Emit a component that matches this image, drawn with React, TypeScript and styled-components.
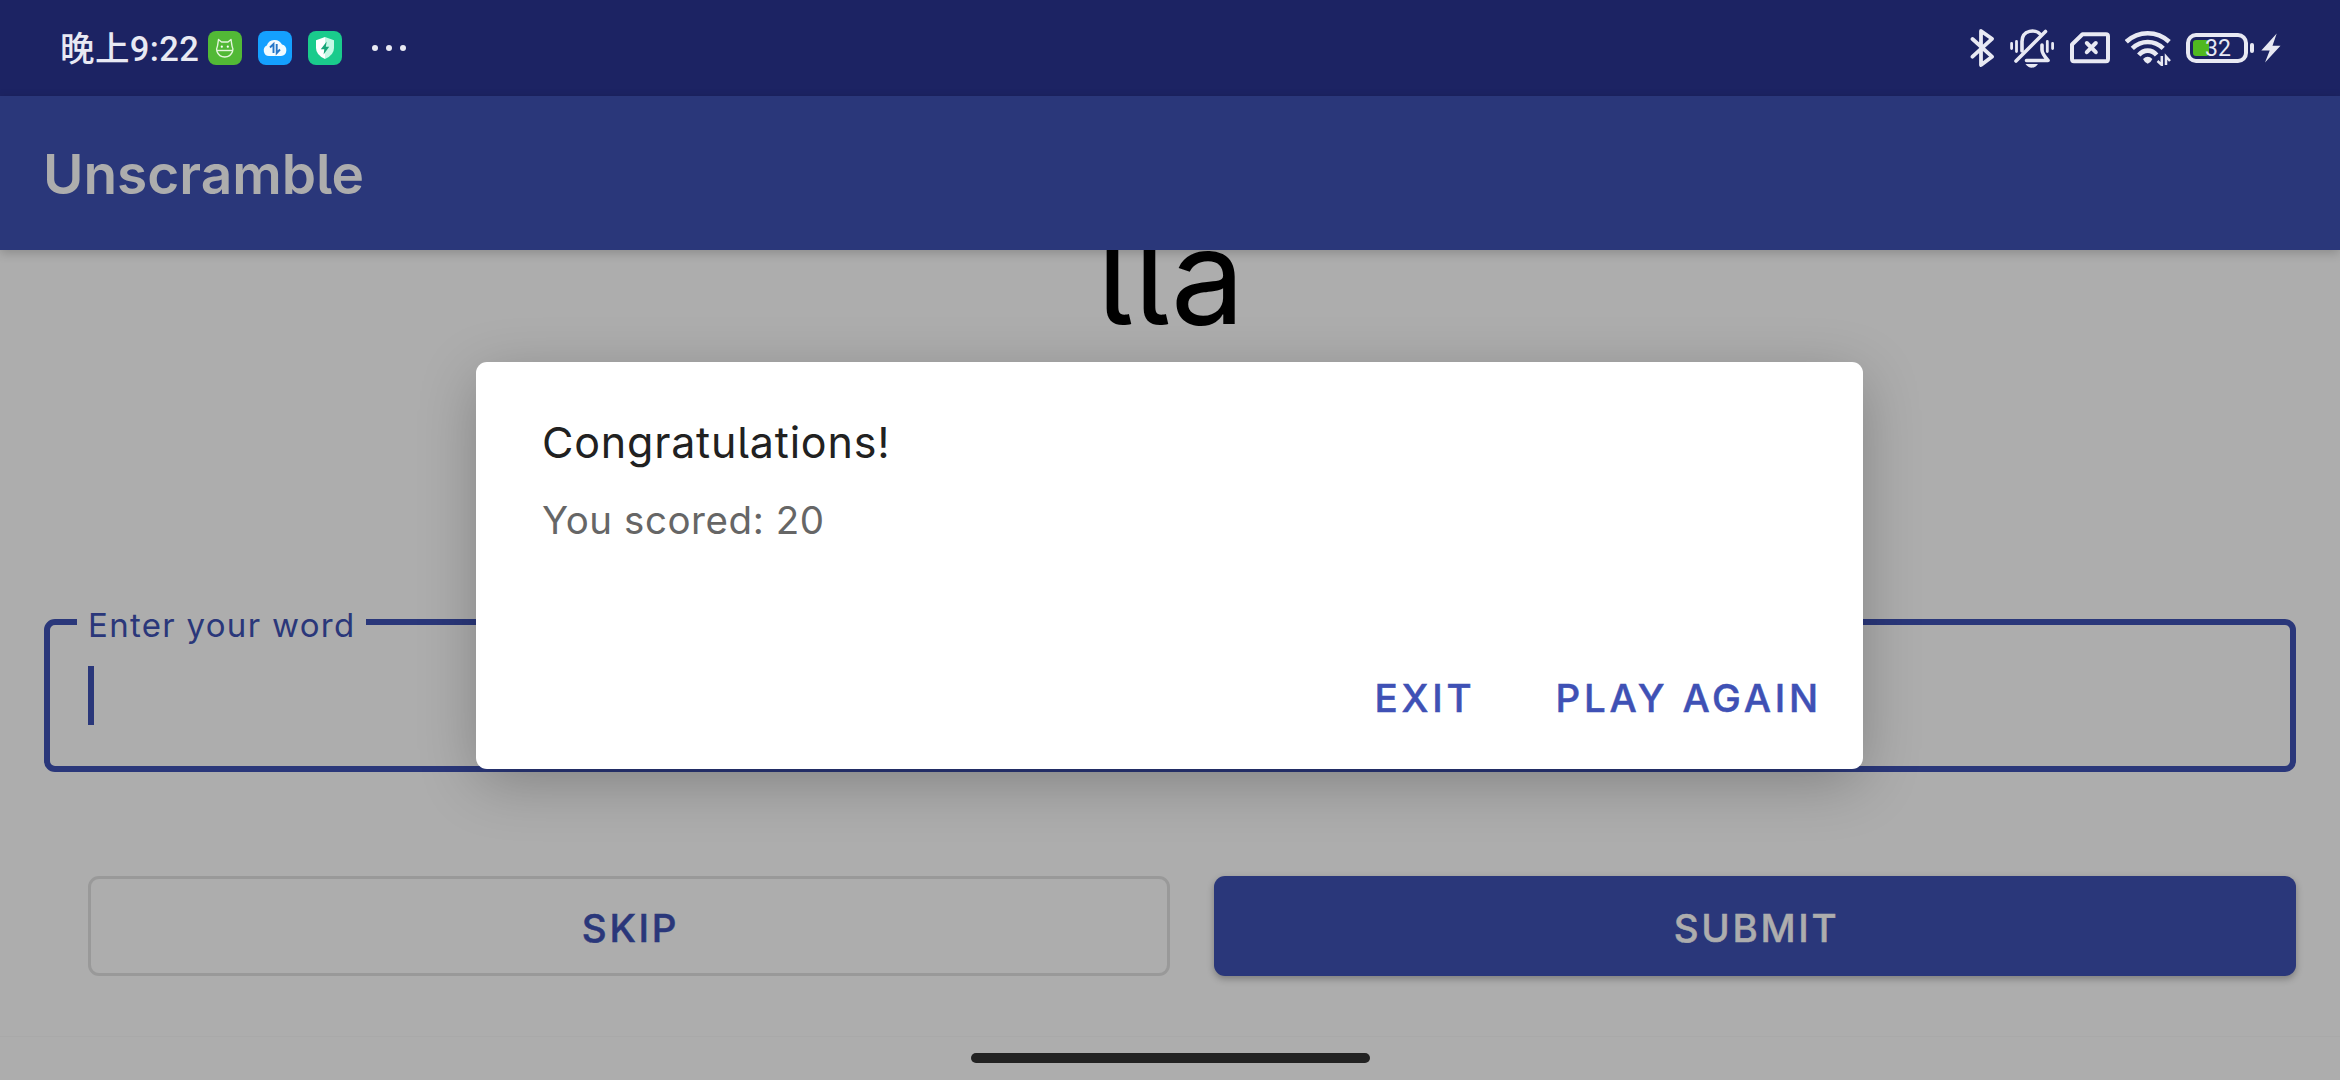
import React from 'react';
import styled, { createGlobalStyle } from 'styled-components';

const INDIGO = '#2a377a';
const SURFACE = '#adadad';
const STATUS_FG = '#e8e9f3';

const GlobalStyle = createGlobalStyle`
  * { box-sizing: border-box; }
  body { margin: 0; background: ${SURFACE}; }
`;

const Screen = styled.div`
  position: relative;
  display: flex;
  flex-direction: column;
  width: 2340px;
  height: 1080px;
  overflow: hidden;
  background: ${SURFACE};
  font-family: Inter, "Noto Sans", sans-serif;
  font-feature-settings: "cv05";
`;

const StatusBar = styled.header`
  display: flex;
  flex: none;
  align-items: center;
  justify-content: space-between;
  height: 96px;
  padding: 0 59px 0 60px;
  background: #1c2363;
  color: ${STATUS_FG};
`;

const StatusGroup = styled.div`
  display: flex;
  align-items: center;
`;

const Clock = styled.span`
  width: 148px;
  padding-top: 1px;
  font: 500 34.5px/40px Roboto, "Noto Sans CJK SC", sans-serif;
  letter-spacing: 0.4px;
  white-space: nowrap;
`;

const AppBadge = styled.svg`
  width: 34px;
  height: 34px;
  margin-right: 16px;
`;

const StatusIcon = styled.svg<{ $gap: number }>`
  display: block;
  margin-left: ${p => p.$gap}px;
`;

const Battery = styled.div`
  position: relative;
  display: flex;
  align-items: center;
  justify-content: center;
  width: 62px;
  height: 30px;
  margin-left: 15px;
  padding-left: 2px;
  border: 4px solid ${STATUS_FG};
  border-radius: 10px;
`;

const BatteryLevel = styled.i`
  position: absolute;
  left: 3px;
  top: 3px;
  width: 16px;
  height: 16px;
  border-radius: 3px;
  background: #50b820;
`;

const BatteryText = styled.span`
  position: relative;
  padding-top: 1px;
  font: 400 23px/22px Roboto, sans-serif;
`;

const BatteryTip = styled.i`
  width: 4px;
  height: 10px;
  margin-left: 2px;
  border-radius: 2px;
  background: ${STATUS_FG};
`;

const AppBar = styled.div`
  position: relative;
  z-index: 1;
  display: flex;
  flex: none;
  align-items: center;
  height: 154px;
  padding: 2px 43px 0;
  background: ${INDIGO};
  box-shadow: 0 3px 10px rgba(0, 0, 0, 0.2);
`;

const AppTitle = styled.h1`
  margin: 0;
  color: ${SURFACE};
  font-size: 55px;
  font-weight: 600;
  line-height: 66px;
`;

const Content = styled.main`
  display: flex;
  flex: 1;
  flex-direction: column;
  min-height: 0;
  padding: 0 44px;
`;

const ScrambledWord = styled.div`
  flex: none;
  height: 160px;
  margin-top: -54px;
  padding-left: 2px;
  color: #000;
  font-size: 132px;
  line-height: 160px;
  letter-spacing: 0.8px;
  text-align: center;
`;

const WordField = styled.fieldset`
  flex: none;
  min-width: 0;
  height: 170px;
  margin: 246px 0 0;
  padding: 0 27px;
  border: 6px solid ${INDIGO};
  border-radius: 11px;
`;

const FieldLabel = styled.legend`
  width: 289px;
  height: 40px;
  padding: 3px 0 0 11px;
  color: ${INDIGO};
  font-size: 33px;
  line-height: 40px;
  letter-spacing: 1.3px;
  white-space: nowrap;
`;

const Caret = styled.div`
  width: 6px;
  height: 59px;
  margin: 24px 0 0 11px;
  background: ${INDIGO};
`;

const Actions = styled.div`
  display: grid;
  flex: none;
  grid-template-columns: 1fr 1fr;
  gap: 44px;
  height: 100px;
  margin-top: 104px;
  padding-left: 44px;
`;

const ActionButton = styled.button<{ $filled?: boolean }>`
  margin: 0;
  padding: 3px 0 0 3px;
  border: ${p => (p.$filled ? '0' : '3px solid #999')};
  border-radius: 11px;
  background: ${p => (p.$filled ? INDIGO : 'transparent')};
  box-shadow: ${p => (p.$filled ? '0 3px 7px rgba(0, 0, 0, 0.28)' : 'none')};
  color: ${p => (p.$filled ? SURFACE : INDIGO)};
  font: inherit;
  font-size: 38.5px;
  font-weight: 500;
  letter-spacing: 2.7px;
  -webkit-text-stroke: 0.5px currentColor;
`;

const NavigationBar = styled.footer`
  display: flex;
  flex: none;
  justify-content: center;
  height: 44px;
  padding-top: 16px;
  border-top: 1px solid #a9a9a9;
`;

const HomeHandle = styled.div`
  width: 399px;
  height: 10px;
  border-radius: 5px;
  background: #222;
`;

const Dialog = styled.section`
  position: absolute;
  z-index: 2;
  left: 476px;
  top: 362px;
  display: flex;
  flex-direction: column;
  width: 1387px;
  height: 407px;
  padding: 53px 41px 41px 66px;
  border-radius: 11px;
  background: #fff;
  box-shadow: 0 14px 60px -4px rgba(0, 0, 0, 0.27);
`;

const DialogTitle = styled.h2`
  margin: 0;
  color: #212121;
  font-size: 43px;
  font-weight: 400;
  line-height: 54px;
  letter-spacing: 0.8px;
`;

const DialogMessage = styled.p`
  margin: 27px 0 0;
  color: #666;
  font-size: 38.5px;
  line-height: 48px;
  letter-spacing: 0.55px;
`;

const DialogActions = styled.div`
  display: flex;
  justify-content: flex-end;
  gap: 80px;
  margin-top: auto;
`;

const DialogButton = styled.button`
  margin: 0;
  padding: 0;
  border: 0;
  background: none;
  color: #3f51b5;
  font: inherit;
  font-size: 38.5px;
  font-weight: 500;
  line-height: 60px;
  letter-spacing: 3.8px;
  -webkit-text-stroke: 0.5px currentColor;
`;

const MascotBadge = () => (
  <AppBadge viewBox="0 0 34 34">
    <rect width="34" height="34" rx="8" fill="#52b936" />
    <g fill="none" stroke="#e4f6dc" strokeWidth="1.4" strokeLinejoin="round">
      <path d="M9.5 15 L10.5 8.5 L13.5 11 H20 L23 8.5 L24 15 Q25.5 18 24.5 20.5 Q22.5 26 16.8 26 Q11 26 9 20.5 Q8 18 9.5 15 Z" />
      <path d="M8.8 19.5 H24.8" />
    </g>
    <circle cx="13.8" cy="15.7" r="1.1" fill="#fff" />
    <circle cx="19.8" cy="15.7" r="1.1" fill="#fff" />
  </AppBadge>
);

const CloudBadge = () => (
  <AppBadge viewBox="0 0 34 34">
    <rect width="34" height="34" rx="8" fill="#14a0ff" />
    <path d="M11 25 A5.5 5.5 0 0 1 8.8 14.6 A8.2 8.2 0 0 1 24 13.6 A5.8 5.8 0 0 1 23 25 Z" fill="#f2fbff" />
    <path d="M12 16.5 L15.5 13 V22 M18.7 13 V22 L22 18.5" fill="none" stroke="#2576c8" strokeWidth="1.9" />
  </AppBadge>
);

const ShieldBadge = () => (
  <AppBadge viewBox="0 0 34 34">
    <rect width="34" height="34" rx="8" fill="#1acb8c" />
    <path d="M17 6 L8 9.2 V17 Q8 24 17 28 Z" fill="#fff" />
    <path d="M17 6 L26 9.2 V17 Q26 24 17 28 Z" fill="#c5f8e5" />
    <path d="M18.7 10.5 L12.8 18.2 H16.3 L15.6 23.5 L21.2 15.7 H17.8 Z" fill="#17a678" />
  </AppBadge>
);

const stroke = {
  fill: 'none',
  stroke: STATUS_FG,
  strokeWidth: 4,
  strokeLinecap: 'round' as const,
  strokeLinejoin: 'round' as const,
};

const BluetoothIcon = () => (
  <StatusIcon $gap={0} width="26" height="40" viewBox="0 0 26 40">
    <path {...stroke} strokeWidth={3.8} d="M2.5 11 L22 28.7 L11 37 V3 L22 10.8 L2.5 28.7" />
  </StatusIcon>
);

const BellOffIcon = () => (
  <StatusIcon $gap={14} width="45" height="40" viewBox="0 0 45 40">
    <g {...stroke} strokeWidth={3.6}>
      <path d="M12 23 V13.5 C12 1.5 26 1 30 6" />
      <path d="M32 17 V22 Q32 25.5 38 32.5 H16.5" />
      <path d="M35.5 3.5 L6 33" />
      <path strokeWidth="2.8" d="M1.6 15.5 V20.5 M6.5 13.5 V23.5 M37.3 13.5 V23.5 M42.6 15.5 V20.5" />
    </g>
    <path d="M15.5 36 H28 Q25.5 39.7 21.7 39.7 Q18 39.7 15.5 36 Z" fill={STATUS_FG} />
  </StatusIcon>
);

const SimOffIcon = () => (
  <StatusIcon $gap={15} width="40" height="32" viewBox="0 0 40 32">
    <path {...stroke} d="M12.5 2.2 H36 Q38 2.2 38 4.2 V27 Q38 29.2 36 29.2 H4 Q2 29.2 2 27 V12.5 Z" />
    <path {...stroke} d="M16.8 11 L25.8 20.2 M25.8 11 L16.8 20.2" />
  </StatusIcon>
);

const WifiIcon = () => (
  <StatusIcon $gap={15} width="46" height="36" viewBox="0 0 46 36">
    <g {...stroke} strokeWidth={4.6} strokeLinecap="butt">
      <path d="M1.3 11.8 Q10.5 3.3 22.7 3.3 Q35 3.3 44.2 11.8" />
      <path d="M7.3 18.4 Q14 12 22.7 12 Q31.5 12 38.2 18.4" />
      <path d="M13.8 25 Q17.5 20.6 22.7 20.6 Q28 20.6 31.6 25" />
    </g>
    <path d="M18 29 Q22.7 24.7 27.4 29 Q26 32.4 22.7 33.8 Q19.5 32.4 18 29 Z" fill={STATUS_FG} />
    <path d="M36.8 26 V35 L32.5 31 M41 35 V26.5 L45 31" fill="none" stroke={STATUS_FG} strokeWidth="2.5" />
  </StatusIcon>
);

const ChargingIcon = () => (
  <StatusIcon $gap={7} width="20" height="30" viewBox="0 0 20 30">
    <path d="M15.7 0.5 L0.3 17.5 H8.7 L4 29.5 L19.5 12.7 H11.5 Z" fill={STATUS_FG} />
  </StatusIcon>
);

const MoreDots = () => (
  <svg width="50" height="8" viewBox="0 0 50 8" fill={STATUS_FG}>
    <circle cx="17" cy="4" r="3" />
    <circle cx="31" cy="4" r="3" />
    <circle cx="45" cy="4" r="3" />
  </svg>
);

export default function App() {
  return (
    <Screen>
      <GlobalStyle />
      <StatusBar>
        <StatusGroup>
          <Clock>晚上9:22</Clock>
          <MascotBadge />
          <CloudBadge />
          <ShieldBadge />
          <MoreDots />
        </StatusGroup>
        <StatusGroup>
          <BluetoothIcon />
          <BellOffIcon />
          <SimOffIcon />
          <WifiIcon />
          <Battery>
            <BatteryLevel />
            <BatteryText>32</BatteryText>
          </Battery>
          <BatteryTip />
          <ChargingIcon />
        </StatusGroup>
      </StatusBar>
      <AppBar>
        <AppTitle>Unscramble</AppTitle>
      </AppBar>
      <Content>
        <ScrambledWord>lla</ScrambledWord>
        <WordField>
          <FieldLabel>Enter your word</FieldLabel>
          <Caret />
        </WordField>
        <Actions>
          <ActionButton>SKIP</ActionButton>
          <ActionButton $filled>SUBMIT</ActionButton>
        </Actions>
      </Content>
      <NavigationBar>
        <HomeHandle />
      </NavigationBar>
      <Dialog role="dialog">
        <DialogTitle>Congratulations!</DialogTitle>
        <DialogMessage>You scored: 20</DialogMessage>
        <DialogActions>
          <DialogButton>EXIT</DialogButton>
          <DialogButton>PLAY AGAIN</DialogButton>
        </DialogActions>
      </Dialog>
    </Screen>
  );
}
